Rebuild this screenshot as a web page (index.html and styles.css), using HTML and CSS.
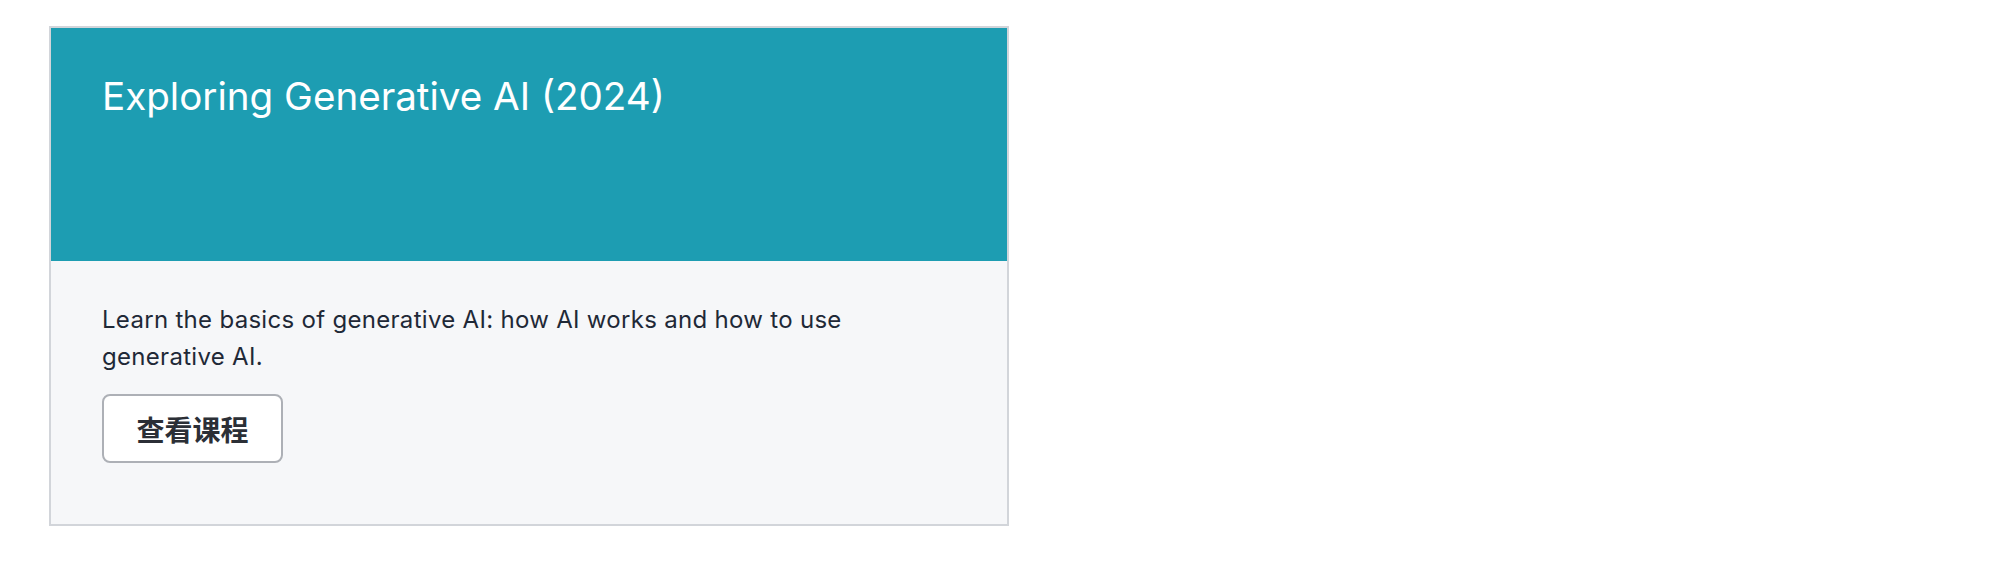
FILE: index.html
```html
<!DOCTYPE html>
<html lang="zh-CN">
<head>
  <meta charset="UTF-8">
  <meta name="viewport" content="width=device-width, initial-scale=1.0">
  <title>Exploring Generative AI (2024)</title>
  <link rel="stylesheet" href="styles.css">
</head>
<body>
  <div class="page">
    <div class="course-card">
      <div class="course-header">
        <h2 class="course-title">Exploring Generative AI (2024)</h2>
      </div>
      <div class="course-body">
        <p class="course-desc">Learn the basics of generative AI: how AI works and how to use generative AI.</p>
        <button class="course-btn">查看课程</button>
      </div>
    </div>
  </div>
</body>
</html>
```

FILE: styles.css
```css
body {
  margin: 0;
  padding: 0;
  font-family: Inter, "Noto Sans CJK SC", sans-serif;
  background-color: #fff;
  color: #1f2937;
}

.page {
  padding: 26px 49px;
}

.course-card {
  box-sizing: border-box;
  width: 960px;
  height: 500px;
  border: 2px solid #d2d5da;
  display: flex;
  flex-direction: column;
  background-color: #f6f7f9;
}

.course-header {
  box-sizing: border-box;
  height: 233px;
  padding: 44px 51px 0;
  background-color: #1d9db2;
}

.course-title {
  margin: 0;
  font-size: 38.6px;
  font-weight: 400;
  line-height: 48px;
  color: #fff;
}

.course-body {
  flex: 1;
  padding: 40px 51px 0;
}

.course-desc {
  margin: 0 0 19px;
  max-width: 780px;
  font-size: 24px;
  line-height: 37px;
  letter-spacing: 0.3px;
  color: #1f2937;
}

.course-btn {
  box-sizing: border-box;
  width: 181px;
  height: 69px;
  font-family: "Noto Sans CJK SC", sans-serif;
  font-size: 28px;
  font-weight: 700;
  color: #2b2f36;
  background-color: #fff;
  border: 2px solid #adb0b6;
  border-radius: 8px;
  cursor: pointer;
}
```
